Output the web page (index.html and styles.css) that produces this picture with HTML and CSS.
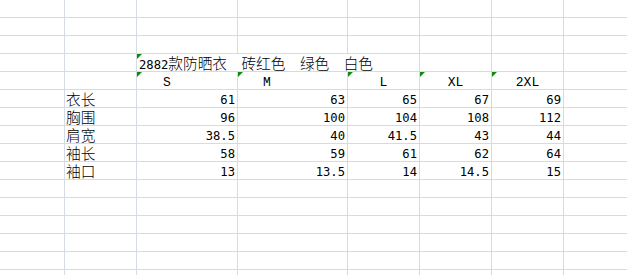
FILE: index.html
```html
<!DOCTYPE html>
<html lang="zh-CN">
<head>
<meta charset="utf-8">
<title>2882款防晒衣 尺码表</title>
<link rel="stylesheet" href="styles.css">
</head>
<body>
<div class="sheet">
  <div class="c"></div><div class="c"></div><div class="c"></div><div class="c"></div><div class="c"></div><div class="c"></div><div class="c"></div><div class="c"></div>
  <div class="c"></div><div class="c"></div><div class="c"></div><div class="c"></div><div class="c"></div><div class="c"></div><div class="c"></div><div class="c"></div>
  <div class="c"></div><div class="c"></div><div class="c"></div><div class="c"></div><div class="c"></div><div class="c"></div><div class="c"></div><div class="c"></div>

  <div class="c"></div><div class="c"></div>
  <div class="c title flag"><span class="tnum">2882</span>款防晒衣  砖红色  绿色  白色</div>
  <div class="c"></div><div class="c"></div><div class="c"></div>

  <div class="c"></div><div class="c"></div>
  <div class="c hd hd-l flag">S</div>
  <div class="c hd hd-l hd-m flag">M</div>
  <div class="c hd flag">L</div>
  <div class="c hd flag">XL</div>
  <div class="c hd flag">2XL</div>
  <div class="c"></div>

  <div class="c"></div><div class="c label">衣长</div>
  <div class="c num">61</div><div class="c num">63</div><div class="c num">65</div><div class="c num">67</div><div class="c num">69</div>
  <div class="c"></div>

  <div class="c"></div><div class="c label">胸围</div>
  <div class="c num">96</div><div class="c num">100</div><div class="c num">104</div><div class="c num">108</div><div class="c num">112</div>
  <div class="c"></div>

  <div class="c"></div><div class="c label">肩宽</div>
  <div class="c num">38.5</div><div class="c num">40</div><div class="c num">41.5</div><div class="c num">43</div><div class="c num">44</div>
  <div class="c"></div>

  <div class="c"></div><div class="c label">袖长</div>
  <div class="c num">58</div><div class="c num">59</div><div class="c num">61</div><div class="c num">62</div><div class="c num">64</div>
  <div class="c"></div>

  <div class="c"></div><div class="c label">袖口</div>
  <div class="c num">13</div><div class="c num">13.5</div><div class="c num">14</div><div class="c num">14.5</div><div class="c num">15</div>
  <div class="c"></div>

  <div class="c"></div><div class="c"></div><div class="c"></div><div class="c"></div><div class="c"></div><div class="c"></div><div class="c"></div><div class="c"></div>
  <div class="c"></div><div class="c"></div><div class="c"></div><div class="c"></div><div class="c"></div><div class="c"></div><div class="c"></div><div class="c"></div>
  <div class="c"></div><div class="c"></div><div class="c"></div><div class="c"></div><div class="c"></div><div class="c"></div><div class="c"></div><div class="c"></div>
  <div class="c"></div><div class="c"></div><div class="c"></div><div class="c"></div><div class="c"></div><div class="c"></div><div class="c"></div><div class="c"></div>
  <div class="c"></div><div class="c"></div><div class="c"></div><div class="c"></div><div class="c"></div><div class="c"></div><div class="c"></div><div class="c"></div>
  <div class="c"></div><div class="c"></div><div class="c"></div><div class="c"></div><div class="c"></div><div class="c"></div><div class="c"></div><div class="c"></div>
</div>
</body>
</html>
```

FILE: styles.css
```css
html, body {
  margin: 0;
  padding: 0;
  background: #ffffff;
}

body {
  width: 627px;
  height: 275px;
  overflow: hidden;
}

.sheet {
  display: grid;
  grid-template-columns: 65px 72px 101px 110px 72px 72px 72px 72px;
  grid-auto-rows: 18px;
  font-family: "Noto Sans CJK SC", sans-serif;
  font-size: 14.67px;
  font-weight: 300;
  color: #000000;
}

.c {
  box-sizing: border-box;
  position: relative;
  border-right: 1px solid #d5dbe5;
  border-bottom: 1px solid #d5dbe5;
  line-height: 17px;
  white-space: pre;
  overflow: visible;
}

.title {
  grid-column: span 3;
  padding-left: 2px;
  word-spacing: 4px;
}

.tnum {
  font-family: "DejaVu Sans Mono", monospace;
  font-size: 12.2px;
  font-weight: 400;
  word-spacing: 0;
}

.label {
  padding-left: 1px;
}

.num {
  font-family: "DejaVu Sans Mono", monospace;
  font-size: 12.2px;
  font-weight: 400;
  text-align: right;
  padding-right: 2px;
  padding-top: 2px;
}

.hd {
  font-family: "Liberation Mono", monospace;
  font-size: 13px;
  font-weight: 400;
  text-align: center;
  padding-top: 2px;
}

.hd-l {
  text-align: left;
  padding-left: 26px;
}

.hd-m {
  padding-left: 25px;
}

.flag::before {
  content: "";
  position: absolute;
  top: 0;
  left: 0;
  width: 0;
  height: 0;
  border-top: 5px solid #0b8a0b;
  border-right: 5px solid transparent;
}
```
